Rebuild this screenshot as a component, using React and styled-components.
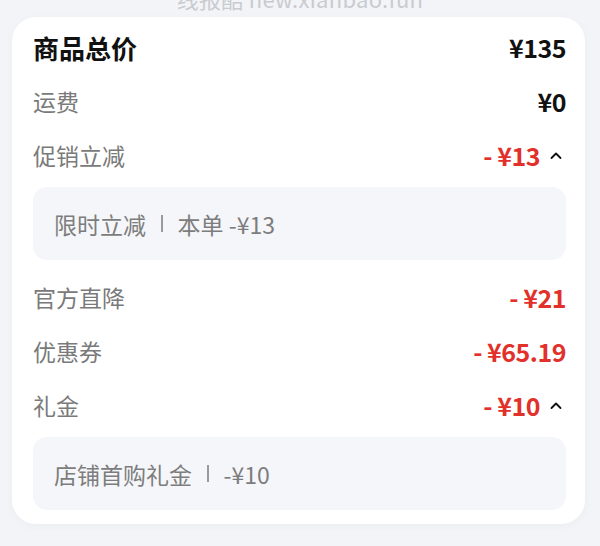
import styled, { createGlobalStyle } from "styled-components";

const GlobalStyle = createGlobalStyle`
  html, body {
    margin: 0;
    padding: 0;
    background: #f3f4f7;
    font-family: "Noto Sans CJK SC", "Noto Sans", sans-serif;
  }
`;

const StyledPage = styled.div`
  position: relative;
  width: 600px;
  height: 546px;
  padding: 17px 15px 0 12px;
  box-sizing: border-box;
  overflow: hidden;
`;

const StyledWatermark = styled.div`
  position: absolute;
  top: -18px;
  left: 0;
  right: 0;
  text-align: center;
  font-size: 22px;
  color: #c9cbd0;
  letter-spacing: 0.3px;
`;

const StyledCard = styled.div`
  background: #ffffff;
  border-radius: 24px;
  box-shadow: 0 2px 10px rgba(0, 0, 0, 0.03);
  padding: 3px 19px 14px 21px;
  display: flex;
  flex-direction: column;
`;

const StyledRow = styled.div`
  height: 54px;
  display: flex;
  justify-content: space-between;
  align-items: center;
`;

const StyledLabel = styled.div`
  font-size: ${(props) => (props.$main ? "26px" : "23px")};
  font-weight: ${(props) => (props.$main ? 700 : 400)};
  color: ${(props) => (props.$main ? "#111111" : "#7a7a7a")};
`;

const StyledValueWrapper = styled.div`
  display: flex;
  align-items: center;
  gap: 10px;
`;

const StyledValue = styled.div`
  font-size: 25px;
  font-weight: 700;
  color: ${(props) => (props.$red ? "#e2312b" : "#111111")};
  letter-spacing: -0.5px;
`;

const StyledChevron = styled.svg`
  margin-right: 4px;
`;

const StyledDetail = styled.div`
  background: #f5f6f9;
  border-radius: 14px;
  height: 73px;
  margin: 5px 0 10px 0;
  padding: 0 21px;
  display: flex;
  align-items: center;
  font-size: 23px;
  color: #7d7d7d;

  &:last-child {
    margin-bottom: 0;
  }
`;

const StyledDivider = styled.span`
  display: inline-block;
  width: 1.5px;
  height: 17px;
  background: #9a9a9a;
  margin: 0 15px;
`;

function ChevronUp() {
  return (
    <StyledChevron width="12" height="9" viewBox="0 0 12 9">
      <path d="M1.5 7 L6 2.5 L10.5 7" fill="none" stroke="#111" strokeWidth="1.8" strokeLinecap="round" strokeLinejoin="round" />
    </StyledChevron>
  );
}

function PriceRow({label, value, red, main, expandable}) {
  return (
    <StyledRow>
      <StyledLabel $main={main}>{label}</StyledLabel>
      <StyledValueWrapper>
        <StyledValue $red={red}>{value}</StyledValue>
        {expandable && <ChevronUp />}
      </StyledValueWrapper>
    </StyledRow>
  );
}

function Detail({name, amount}) {
  return (
    <StyledDetail>
      <span>{name}</span>
      <StyledDivider />
      <span>{amount}</span>
    </StyledDetail>
  );
}

export default function App() {
  return (
    <StyledPage>
      <GlobalStyle />
      <StyledWatermark>线报酷 new.xianbao.fun</StyledWatermark>
      <StyledCard>
        <PriceRow label="商品总价" value="¥135" main />
        <PriceRow label="运费" value="¥0" />
        <PriceRow label="促销立减" value="- ¥13" red expandable />
        <Detail name="限时立减" amount="本单 -¥13" />
        <PriceRow label="官方直降" value="- ¥21" red />
        <PriceRow label="优惠券" value="- ¥65.19" red />
        <PriceRow label="礼金" value="- ¥10" red expandable />
        <Detail name="店铺首购礼金" amount="-¥10" />
      </StyledCard>
    </StyledPage>
  );
}
